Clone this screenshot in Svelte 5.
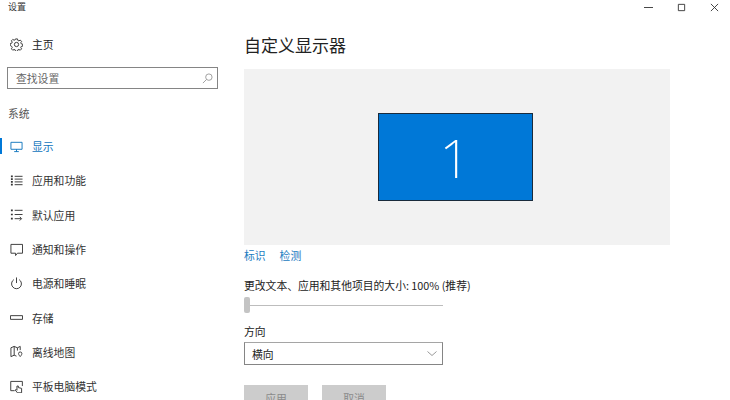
<script>
	const navItems = [
		{ label: '显示', icon: 'display', active: true },
		{ label: '应用和功能', icon: 'apps' },
		{ label: '默认应用', icon: 'defaults' },
		{ label: '通知和操作', icon: 'notify' },
		{ label: '电源和睡眠', icon: 'power' },
		{ label: '存储', icon: 'storage' },
		{ label: '离线地图', icon: 'map' },
		{ label: '平板电脑模式', icon: 'tablet' }
	];
</script>

<div class="window">
	<aside class="sidebar">
		<div class="app-title">设置</div>
		<div class="home">
			<svg class="icon" viewBox="0 0 14 14">
				<path d="M5.900 1h2.200l.3 1.600 1.200.5 1.400-.9 1.500 1.500-.9 1.400.5 1.200 1.600.3v2.200l-1.600.3-.5 1.200.9 1.400-1.500 1.500-1.400-.9-1.200.5-.3 1.600H5.900l-.3-1.600-1.200-.5-1.400.9-1.500-1.500.9-1.400-.5-1.200L.3 8.100V5.900l1.600-.3.5-1.200-.9-1.400 1.500-1.500 1.400.9 1.200-.5z" />
				<circle cx="7" cy="7" r="2.300" />
			</svg>
			<span>主页</span>
		</div>
		<div class="search">
			<span>查找设置</span>
			<svg viewBox="0 0 12 12">
				<circle cx="7.500" cy="4.500" r="3.500" />
				<path d="M5 7 1 11" />
			</svg>
		</div>
		<div class="group">系统</div>
		<nav>
			{#each navItems as item}
				<div class="nav-item" class:active={item.active}>
					<svg class="icon" viewBox="0 0 14 14">
						{#if item.icon === 'display'}
							<path d="M1 2.500h12v7.500H1zM7 10v2.500M4.500 12.500h5" />
						{:else if item.icon === 'apps'}
							<path class="thick" d="M1 2.500h2M1 5.500h2M1 8.500h2M1 11.500h2" />
							<path d="M5 2.500h8.500M5 5.500h8.500M5 8.500h8.500M5 11.500h8.500" />
						{:else if item.icon === 'defaults'}
							<path class="thick" d="M1 2.500h2M1 7h2M1 11.500h2" />
							<path d="M5 2.500h8.500M5 7h8.500M5 11.500h7M10.500 9.500l2 2-2 2" />
						{:else if item.icon === 'notify'}
							<path d="M1 1.500h12.500v9.500H8l-2 2.500V11H1z" />
						{:else if item.icon === 'power'}
							<path d="M7 .5v6M4.200 2.800a5.300 5.300 0 1 0 5.600 0" />
						{:else if item.icon === 'storage'}
							<path d="M.5 5h13v4H.5z" />
						{:else if item.icon === 'map'}
							<path d="M1 3 4.500 1.500 8 3l3-1.500v4M1 3v9.500l3.500-1.500L7 12M4.500 1.500V11M8 3v3" />
							<path d="M11 7.500a1.800 1.800 0 0 1 1.800 1.800c0 1.200-1.800 3.200-1.800 3.200s-1.800-2-1.800-3.200A1.800 1.800 0 0 1 11 7.500z" />
						{:else}
							<path d="M5 11.500H.8V1.500h12.500v5" />
							<path d="M7.500 6.500v4.500l-1-1-.8.800 2.300 3h4.500V9l-3.500-.8V6.500z" />
						{/if}
					</svg>
					<span>{item.label}</span>
				</div>
			{/each}
		</nav>
	</aside>

	<main class="content">
		<div class="controls">
			<svg viewBox="0 0 10 10"><path d="M0 5h10" /></svg>
			<svg viewBox="0 0 10 10"><path d="M1.500 1.500h7v7h-7z" /></svg>
			<svg viewBox="0 0 10 10"><path d="M1 1l8 8M9 1l-8 8" /></svg>
		</div>
		<h1>自定义显示器</h1>
		<div class="preview">
			<div class="monitor">1</div>
		</div>
		<div class="links">
			<span>标识</span>
			<span>检测</span>
		</div>
		<div class="label scale-label">更改文本、应用和其他项目的大小: 100% (推荐)</div>
		<div class="slider">
			<div class="thumb"></div>
			<div class="track"></div>
		</div>
		<div class="label orient-label">方向</div>
		<div class="select">
			<span>横向</span>
			<svg viewBox="0 0 10 5"><path d="M.5.500 5 4.500 9.500.500" /></svg>
		</div>
		<div class="buttons">
			<div class="btn">应用</div>
			<div class="btn">取消</div>
		</div>
	</main>
</div>

<style>
	:global(body) {
		margin: 0;
		background: #fff;
		overflow: hidden;
	}

	.window {
		display: flex;
		width: 730px;
		height: 400px;
		overflow: hidden;
		font-family: 'Noto Sans CJK SC', 'Liberation Sans', sans-serif;
		font-size: 10.800px;
		color: #222;
		background: #fff;
	}

	svg {
		fill: none;
		stroke: currentColor;
		stroke-width: 1;
		display: block;
	}

	.sidebar {
		width: 244px;
		flex-shrink: 0;
	}

	.app-title {
		font-size: 9px;
		line-height: 13px;
		color: #333;
		padding-left: 8px;
	}

	.home {
		display: flex;
		align-items: center;
		gap: 9px;
		height: 20px;
		margin-top: 21px;
		padding-left: 10px;
	}

	.icon {
		width: 13px;
		height: 13px;
		flex-shrink: 0;
		color: #333;
	}

	.search {
		display: flex;
		align-items: center;
		justify-content: space-between;
		box-sizing: border-box;
		width: 211px;
		height: 22px;
		margin: 13px 0 0 7px;
		padding: 0 4px 0 8px;
		border: 1.500px solid #858585;
		color: #666;
	}

	.search svg {
		width: 11px;
		height: 11px;
		color: #999;
	}

	.group {
		margin: 16px 0 0 8px;
		line-height: 16px;
		color: #555;
	}

	nav {
		margin-top: 8px;
	}

	.nav-item {
		display: flex;
		align-items: center;
		gap: 9px;
		height: 34.300px;
		padding-left: 10px;
		position: relative;
		color: #333;
	}

	.thick {
		stroke-width: 1.800;
	}

	.nav-item.active {
		color: #0f75bd;
	}

	.nav-item.active .icon {
		color: #0f75bd;
	}

	.nav-item.active::before {
		content: '';
		position: absolute;
		left: 0;
		top: 9px;
		width: 2px;
		height: 16px;
		background: #0078d7;
	}

	.content {
		flex: 1;
		position: relative;
	}

	.controls {
		position: absolute;
		top: 3px;
		right: 11px;
		display: flex;
		gap: 24px;
		color: #333;
	}

	.controls svg {
		width: 9px;
		height: 9px;
	}

	h1 {
		margin: 32px 0 0;
		font-size: 17px;
		line-height: 25px;
		font-weight: 400;
		color: #222;
	}

	.preview {
		display: flex;
		align-items: center;
		justify-content: center;
		box-sizing: border-box;
		width: 426px;
		height: 176px;
		margin-top: 12px;
		padding-right: 4px;
		background: #f2f2f2;
	}

	.monitor {
		display: flex;
		align-items: center;
		justify-content: center;
		box-sizing: border-box;
		width: 155px;
		height: 88px;
		background: #0078d7;
		border: 1px solid #1a2b3c;
		color: #fff;
		font-family: 'Noto Sans', sans-serif;
		font-weight: 200;
		font-size: 54px;
		line-height: 1;
	}

	.links {
		display: flex;
		gap: 14px;
		margin-top: 2px;
		line-height: 17px;
		color: #1a7bbf;
	}

	.label {
		line-height: 16px;
		color: #222;
	}

	.scale-label {
		margin-top: 13px;
	}

	.slider {
		position: relative;
		width: 199px;
		height: 18px;
		margin-top: 3px;
	}

	.track {
		position: absolute;
		left: 0;
		right: 0;
		top: 9px;
		height: 1px;
		background: #bdbdbd;
	}

	.thumb {
		position: absolute;
		left: 0;
		top: 1px;
		width: 6px;
		height: 16px;
		border-radius: 2px;
		background: #c4c4c4;
		z-index: 1;
	}

	.orient-label {
		margin-top: 9px;
	}

	.select {
		display: flex;
		align-items: center;
		justify-content: space-between;
		box-sizing: border-box;
		width: 199px;
		height: 23px;
		margin-top: 3px;
		padding: 0 5px 0 7px;
		border: 1.500px solid #858585;
		border-top-color: #a5a5a5;
		color: #222;
	}

	.select svg {
		width: 10px;
		height: 5px;
		color: #999;
	}

	.buttons {
		display: flex;
		gap: 14px;
		margin-top: 20px;
	}

	.btn {
		display: flex;
		align-items: center;
		justify-content: center;
		width: 64px;
		height: 26px;
		background: #ccc;
		color: #8a8a8a;
	}
</style>
